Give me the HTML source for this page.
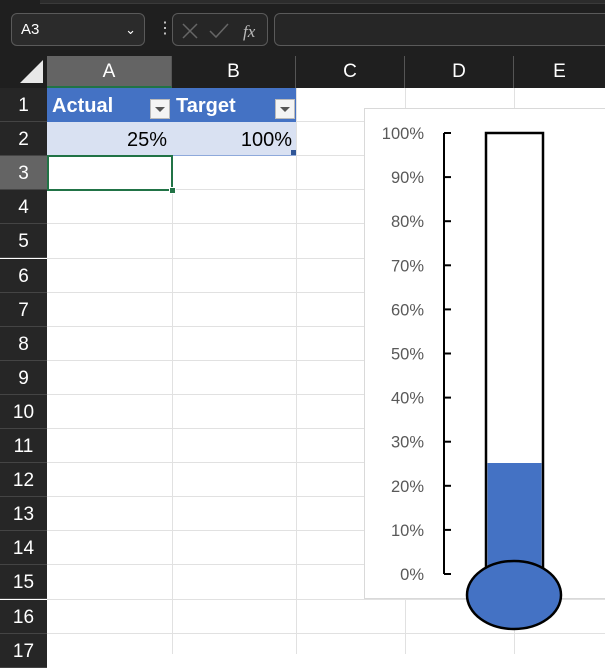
<!DOCTYPE html>
<html><head><style>
*{margin:0;padding:0;box-sizing:border-box}
body{width:605px;height:654px;overflow:hidden;background:#fff;font-family:"Liberation Sans",sans-serif;position:relative}
.a{position:absolute}
.rh{position:absolute;left:0;width:47px;background:#262626;color:#fff;font-size:19px;text-align:center;border-bottom:1px solid #444}
.ch{position:absolute;top:56px;height:32px;color:#fff;font-size:19px;text-align:center;line-height:32px;border-right:1px solid #555}
.vl{position:absolute;top:88px;width:1px;height:566px;background:#e1e1e1}
.hl{position:absolute;left:47px;width:558px;height:1px;background:#e1e1e1}
</style></head><body>
<div class="a" style="left:0;top:0;width:605px;height:88px;background:#1f1f1f"></div>
<div class="a" style="left:40px;top:0;width:565px;height:4px;background:#2c2c2c;border-bottom:1px solid #3a3a3a"></div>
<div class="a" style="left:11px;top:13px;width:134px;height:33px;border:1px solid #5a5a5a;border-radius:6px;background:#2b2b2b;color:#fff;font-size:15px;line-height:31px;padding-left:9px">A3<span style="position:absolute;right:8px;top:0;font-size:13px">&#8964;</span></div>
<div class="a" style="left:157px;top:20px;color:#ddd;font-size:16px;line-height:18px">&#8942;</div>
<div class="a" style="left:172px;top:13px;width:96px;height:33px;border:1px solid #5a5a5a;border-radius:6px;background:#262626">
<svg width="96" height="33" style="position:absolute;left:0;top:0"><path d="M10 10 L24 24 M24 10 L10 24" stroke="#666" stroke-width="1.5"/><path d="M37 17 L43 23 L55 10" stroke="#666" stroke-width="1.5" fill="none"/><text x="70" y="23" fill="#bbb" font-family="Liberation Serif" font-style="italic" font-size="17">fx</text></svg></div>
<div class="a" style="left:274px;top:13px;width:340px;height:33px;border:1px solid #5a5a5a;border-radius:6px;background:#262626"></div>
<svg class="a" style="left:0;top:56px" width="47" height="32"><path d="M20 27 L43 27 L43 4 Z" fill="#e8e8e8"/></svg>
<div class="ch" style="left:47px;width:125px;background:#646464;border-bottom:2px solid #217346">A</div>
<div class="ch" style="left:172px;width:124px">B</div>
<div class="ch" style="left:296px;width:109px">C</div>
<div class="ch" style="left:405px;width:109px">D</div>
<div class="ch" style="left:514px;width:91px;border:none">E</div>
<div id="rows"></div>
<div class="vl" style="left:172px"></div><div class="vl" style="left:296px"></div><div class="vl" style="left:405px"></div><div class="vl" style="left:514px"></div>
<div id="hls"></div>
<div class="a" style="left:47px;top:88px;width:249px;height:34px;background:#4472c4;color:#fff;font-weight:bold;font-size:20px;line-height:36px">
<span class="a" style="left:5px">Actual</span><span class="a" style="left:129px">Target</span>
<div class="a" style="left:103px;top:11px;width:20px;height:20px;background:#f4f4f4;border:1px solid #bbb"><div style="margin:7px auto 0;width:0;height:0;border-left:5px solid transparent;border-right:5px solid transparent;border-top:5px solid #555"></div></div>
<div class="a" style="left:228px;top:11px;width:20px;height:20px;background:#f4f4f4;border:1px solid #bbb"><div style="margin:7px auto 0;width:0;height:0;border-left:5px solid transparent;border-right:5px solid transparent;border-top:5px solid #555"></div></div>
</div>
<div class="a" style="left:47px;top:122px;width:249px;height:34px;background:#d9e1f2;border-bottom:1px solid #8ea9db;color:#000;font-size:20px;line-height:37px">
<span class="a" style="right:129px">25%</span><span class="a" style="right:4px">100%</span>
<div class="a" style="right:0;bottom:0;width:5px;height:5px;background:#2f5597"></div></div>
<div class="a" style="left:47px;top:155px;width:126px;height:36px;border:2px solid #217346"></div>
<div class="a" style="left:169px;top:187px;width:7px;height:7px;background:#217346;border:1px solid #fff"></div>
<div class="a" style="left:364px;top:108px;width:245px;height:491px;background:#fff;border:1px solid #d9d9d9"></div>
<svg class="a" style="left:0;top:0" width="605" height="654">
<g font-family="Liberation Sans" font-size="16.5" fill="#595959" text-anchor="end" id="lab"></g>
<path d="M444 133 V574" stroke="#000" stroke-width="2"/>
<g id="ticks" stroke="#000" stroke-width="2"></g>
<rect x="486" y="133" width="57" height="441" fill="#fff" stroke="#000" stroke-width="2.5"/>
<rect x="487.5" y="463" width="54" height="110" fill="#4472c4"/>
<ellipse cx="514" cy="595" rx="47" ry="34" fill="#4472c4" stroke="#000" stroke-width="2.5"/>
</svg>
<script>
var r='';for(var i=1;i<=17;i++){var t=88+34.1*(i-1);r+='<div class="rh" style="top:'+t+'px;height:34.1px;line-height:36px;'+(i==3?'background:#646464;':'')+'">'+i+'</div>';}
document.getElementById('rows').innerHTML=r;
var h='';for(var i=2;i<=17;i++){var t=88+34.1*(i-1)-1;h+='<div class="hl" style="top:'+t+'px"></div>';}document.getElementById('hls').innerHTML=h;
var L='',T='';for(var k=0;k<=10;k++){var y=574-44.1*k;L+='<text x="424" y="'+(y+6)+'">'+(k*10)+'%</text>';T+='<path d="M444 '+y+' H451"/>';}
document.getElementById('lab').innerHTML=L;document.getElementById('ticks').innerHTML=T;
</script>
</body></html>
